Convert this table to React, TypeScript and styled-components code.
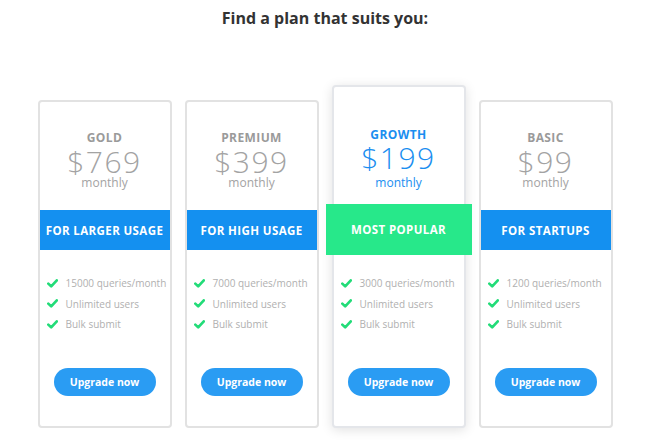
import React from "react";
import styled, { createGlobalStyle } from "styled-components";

const Global = createGlobalStyle`
  html, body { margin: 0; padding: 0; background: #ffffff; }
  body { width: 650px; height: 441px; overflow: hidden; font-family: "Open Sans", "Liberation Sans", sans-serif; }
  * { box-sizing: border-box; }
`;

const Page = styled.div`
  width: 650px;
  height: 441px;
  display: flex;
  flex-direction: column;
  align-items: center;
`;

const Title = styled.h1`
  margin: 8px 0 0;
  font-size: 16px;
  line-height: 20px;
  font-weight: 700;
  color: #333333;
`;

const Row = styled.div`
  margin-top: 57px;
  display: flex;
  align-items: flex-end;
  gap: 13px;
`;

const Card = styled.div<{ $featured?: boolean }>`
  width: 134px;
  height: ${(p) => (p.$featured ? 343 : 328)}px;
  border: 2px solid ${(p) => (p.$featured ? "#e4e6ea" : "#e2e2e2")};
  border-radius: 4px;
  background: #fff;
  display: flex;
  flex-direction: column;
  box-shadow: ${(p) => (p.$featured ? "0 2px 12px rgba(0,0,0,0.12)" : "none")};
`;

const Header = styled.div<{ $featured?: boolean }>`
  height: ${(p) => (p.$featured ? 117 : 108)}px;
  display: flex;
  flex-direction: column;
  align-items: center;
  justify-content: flex-end;
  padding-bottom: ${(p) => (p.$featured ? 15 : 21)}px;
  color: ${(p) => (p.$featured ? "#1a8ef0" : "#a3a3a3")};
`;

const Label = styled.div<{ $featured?: boolean }>`
  font-size: 12px;
  line-height: 14px;
  font-weight: 700;
  letter-spacing: 0.4px;
  color: ${(p) => (p.$featured ? "#1a8ef0" : "#9a9a9a")};
`;

const Price = styled.div<{ $featured?: boolean }>`
  font-size: 30px;
  line-height: 30px;
  font-weight: 300;
  letter-spacing: 1.5px;
  margin-top: ${(p) => (p.$featured ? 1 : 2)}px;
`;

const Period = styled.div<{ $featured?: boolean }>`
  font-size: 12px;
  line-height: 12px;
  margin-top: ${(p) => (p.$featured ? 4 : 0)}px;
`;

const Band = styled.div<{ $featured?: boolean }>`
  height: ${(p) => (p.$featured ? 51 : 40)}px;
  margin: 0 ${(p) => (p.$featured ? -8 : 0)}px;
  background: ${(p) => (p.$featured ? "#27e88a" : "#1490f0")};
  color: #fff;
  display: flex;
  align-items: center;
  justify-content: center;
  font-size: 11.5px;
  font-weight: 700;
  letter-spacing: 0.4px;
`;

const Features = styled.ul<{ $featured?: boolean }>`
  list-style: none;
  margin: 0;
  padding: ${(p) => (p.$featured ? 18 : 23)}px 0 0 7px;
  display: flex;
  flex-direction: column;
`;

const Feature = styled.li`
  height: 20.5px;
  display: flex;
  align-items: center;
  gap: 8px;
  font-size: 10px;
  color: #b0b0b0;
  white-space: nowrap;
`;

const Button = styled.button`
  margin: auto auto 30px;
  width: 102px;
  height: 28px;
  border: none;
  border-radius: 14px;
  background: #2a9cf3;
  color: #fff;
  font-family: inherit;
  font-size: 10.5px;
  font-weight: 700;
  cursor: pointer;
`;

const Check = () => (
  <svg width="11" height="9" viewBox="0 0 11 9" aria-hidden="true">
    <polyline points="1.3,4.6 4.2,7.4 9.8,1.4" fill="none" stroke="#22dc78" strokeWidth="2.7" strokeLinecap="round" strokeLinejoin="round" />
  </svg>
);

type Plan = { name: string; price: string; band: string; queries: string; featured?: boolean };

const plans: Plan[] = [
  { name: "GOLD", price: "$769", band: "FOR LARGER USAGE", queries: "15000 queries/month" },
  { name: "PREMIUM", price: "$399", band: "FOR HIGH USAGE", queries: "7000 queries/month" },
  { name: "GROWTH", price: "$199", band: "MOST POPULAR", queries: "3000 queries/month", featured: true },
  { name: "BASIC", price: "$99", band: "FOR STARTUPS", queries: "1200 queries/month" },
];

export default function App() {
  return (
    <Page>
      <Global />
      <Title>Find a plan that suits you:</Title>
      <Row>
        {plans.map((p) => (
          <Card key={p.name} $featured={p.featured}>
            <Header $featured={p.featured}>
              <Label $featured={p.featured}>{p.name}</Label>
              <Price $featured={p.featured}>{p.price}</Price>
              <Period $featured={p.featured}>monthly</Period>
            </Header>
            <Band $featured={p.featured}>{p.band}</Band>
            <Features $featured={p.featured}>
              {[p.queries, "Unlimited users", "Bulk submit"].map((f) => (
                <Feature key={f}>
                  <Check />
                  {f}
                </Feature>
              ))}
            </Features>
            <Button>Upgrade now</Button>
          </Card>
        ))}
      </Row>
    </Page>
  );
}
